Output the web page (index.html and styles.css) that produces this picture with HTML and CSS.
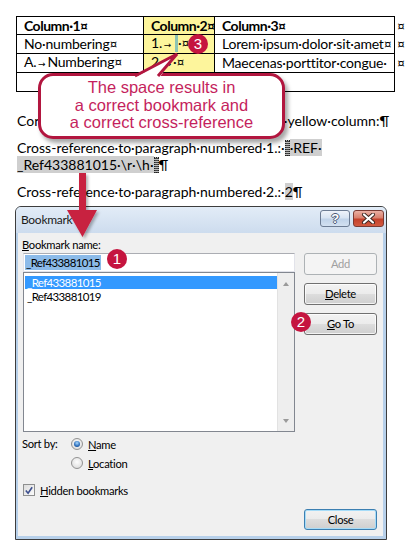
FILE: index.html
```html
<!DOCTYPE html>
<html lang="en">
<head>
<meta charset="utf-8">
<title>Bookmark</title>
<link rel="stylesheet" href="styles.css">
</head>
<body>
<main class="doc">
  <table class="tbl">
    <colgroup><col class="w1"><col class="w2"><col class="w3"><col class="w4"></colgroup>
    <tr>
      <td class="cell hd">Column·1¤</td>
      <td class="cell hd yel">Column·2¤</td>
      <td class="cell hd">Column·3¤</td>
      <td class="rowend">¤</td>
    </tr>
    <tr>
      <td class="cell">No·numbering¤</td>
      <td class="cell yel">1.<span class="tab">→</span><span class="caret"></span>·¤</td>
      <td class="cell">Lorem·ipsum·dolor·sit·amet¤</td>
      <td class="rowend">¤</td>
    </tr>
    <tr>
      <td class="cell">A.<span class="tab">→</span>Numbering¤</td>
      <td class="cell yel">2.<span class="tab">→</span>·¤</td>
      <td class="cell">Maecenas·porttitor·congue·</td>
      <td class="rowend">¤</td>
    </tr>
    <tr class="tall">
      <td class="cell" colspan="3"></td>
      <td class="rowend"></td>
    </tr>
  </table>
  <p class="para first">Correct·cross-references·to·the·items·in·the·yellow·column:¶</p>
  <p class="para">Cross-reference·to·paragraph·numbered·1.:·<span class="fmark"></span><span class="fld">·REF·</span><br><span class="fld">_Ref433881015·\r·\h·</span><span class="fmark"></span>¶</p>
  <p class="para last">Cross-reference·to·paragraph·numbered·2.:·<span class="fld">2</span>¶</p>

  <section class="dlg">
    <header class="titlebar">
      <span class="title">Bookmark</span>
      <span class="tbtns">
        <span class="tb help">?</span>
        <span class="tb close"><svg width="15" height="11" viewBox="0 0 15 11"><path d="M3 1.5 L12 9.5 M12 1.5 L3 9.5" stroke="#3a2520" stroke-width="4" stroke-linecap="round"/><path d="M3 1.5 L12 9.5 M12 1.5 L3 9.5" stroke="#fff" stroke-width="2.2" stroke-linecap="round"/></svg></span>
      </span>
    </header>
    <div class="dbody">
      <div class="lbl"><u>B</u>ookmark name:</div>
      <div class="main">
        <div class="left">
          <div class="input"><span class="sel">_Ref433881015</span></div>
          <div class="list">
            <div class="items">
              <div class="item on">_Ref433881015</div>
              <div class="item">_Ref433881019</div>
            </div>
            <div class="sbar"><span class="up"></span><span class="dn"></span></div>
          </div>
        </div>
        <div class="btns">
          <div class="btn dis">Add</div>
          <div class="btn"><u>D</u>elete</div>
          <div class="btn"><u>G</u>o To</div>
        </div>
      </div>
      <div class="sort">
        <span class="sortlbl">Sort by:</span>
        <div class="radios">
          <div class="ropt"><span class="radio on"></span><span><u>N</u>ame</span></div>
          <div class="ropt"><span class="radio"></span><span><u>L</u>ocation</span></div>
        </div>
      </div>
      <div class="chk"><span class="box"><svg width="11" height="11" viewBox="0 0 11 11"><path d="M2 5.5 L4.5 8.5 L9 2" fill="none" stroke="#3d4f8e" stroke-width="1.8"/></svg></span><span><u>H</u>idden bookmarks</span></div>
      <div class="foot"><div class="btn def">Close</div></div>
    </div>
  </section>
</main>

<div class="callout">The space results in<br>a correct bookmark and<br>a correct cross-reference</div>
<svg class="ovl" width="411" height="551" viewBox="0 0 411 551">
  <defs>
    <filter id="sh" x="-30%" y="-30%" width="160%" height="160%"><feDropShadow dx="2" dy="2" stdDeviation="1.5" flood-color="#000" flood-opacity="0.3"/></filter>
  </defs>
  <polygon points="134,78 177,54 159,78" fill="#fff"/>
  <polyline points="135,76 177,54 158,76" fill="none" stroke="#b2163f" stroke-width="3" stroke-linejoin="miter"/>
  <path d="M79 173 H86 V210 H97 L82.5 237 L67 210 H79 Z" fill="#c8203f" filter="url(#sh)"/>
</svg>
<span class="badge b3">3</span>
<span class="badge b1">1</span>
<span class="badge b2">2</span>
</body>
</html>
```
FILE: styles.css
```css
* { box-sizing: border-box; }
html, body { margin: 0; padding: 0; }
body { width: 411px; height: 551px; position: relative; overflow: hidden; background: #fff; }

.doc { padding-top: 16px; font-family: Lato, "Liberation Sans", sans-serif; font-size: 14px; color: #000; }

.tbl { margin-left: 16px; border-collapse: collapse; table-layout: fixed; width: 392px; }
.w1 { width: 127px; }
.w2 { width: 71px; }
.w3 { width: 180px; }
.w4 { width: 14px; }
.cell { border: 1px solid #000; height: 18px; padding: 0 0 0 7px; line-height: 16px; white-space: nowrap; overflow: hidden; letter-spacing: -0.2px; }
.tall .cell { height: 19px; }
.hd { font-weight: bold; letter-spacing: -0.5px; }
.yel { background: #fdf59c; }
.rowend { border: none; padding: 0 0 0 2px; line-height: 16px; white-space: nowrap; }
.tab { display: inline-block; width: 11px; text-align: center; font-family: "DejaVu Sans", sans-serif; font-size: 9px; letter-spacing: 0; }
.caret { display: inline-block; width: 3px; height: 17px; background: #8cc4b4; vertical-align: -4px; margin: 0 0 0 2px; }

.para { margin: 0 0 10px 17px; line-height: 17px; white-space: nowrap; }
.para.first { margin-top: 20px; }
.para.last { margin-bottom: 6px; }
.fld { background: #cfcfcf; }
.fmark { display: inline-block; width: 5px; height: 16px; vertical-align: -3px; border: 1px dotted #222; background: repeating-linear-gradient(#444 0 1px, #bbb 1px 2px); }

/* dialog */
.dlg { width: 372px; height: 334px; margin-left: 15px; border: 1px solid #3d3d3d; border-radius: 6px 6px 0 0; background: #b7d0ea; display: flex; flex-direction: column; font-family: Lato, "Open Sans", sans-serif; font-size: 11.2px; letter-spacing: -0.3px; color: #000; }
.titlebar { height: 26px; flex: none; display: flex; justify-content: space-between; padding: 0 2px 0 5px; background: linear-gradient(#e2ecf7, #cddcee); border-radius: 5px 5px 0 0; }
.title { line-height: 26px; font-size: 12px; color: #1b1b1b; }
.tbtns { display: flex; gap: 3px; padding-top: 3px; }
.tb { height: 17px; border: 1px solid #6c7c93; border-radius: 3px; display: flex; align-items: center; justify-content: center; }
.help { width: 30px; background: linear-gradient(#eef3fa, #d8e4f2 45%, #c0d3e9 55%, #d3e1f1); color: #fff; font-family: "Liberation Sans", sans-serif; font-weight: bold; font-size: 13px; text-shadow: 1px 0 #4a5a76, -1px 0 #4a5a76, 0 1px #4a5a76, 0 -1px #4a5a76; }
.close { width: 31px; border-color: #7a3a33; background: linear-gradient(#eab0a4, #d9806e 45%, #c4412b 55%, #d25a40); }

.dbody { flex: 1; margin: 0 3px 3px 2px; background: #f0f0f0; padding: 4px 6px 0 4px; display: flex; flex-direction: column; }
.lbl { height: 16px; line-height: 16px; }
.main { display: flex; }
.left { width: 272px; margin-left: 1px; }
.input { height: 19px; background: #fff; border: 1px solid #e2e3ea; border-top-color: #abadb3; padding: 1px 0 0 1px; }
.sel { display: inline-block; background: #8cbbe9; line-height: 15px; padding: 0 1px; font-size: 11.5px; letter-spacing: -0.65px; }
.list { height: 160px; border: 1px solid #828790; background: #fff; display: flex; }
.items { flex: 1; padding: 3px 0 0 1px; font-size: 11.5px; letter-spacing: -0.65px; }
.item { height: 13px; line-height: 13px; padding-left: 2px; margin-bottom: 1px; }
.item.on { background: #3399ff; color: #fff; }
.sbar { width: 17px; background: #eeeeee; border-left: 1px solid #e2e2e2; display: flex; flex-direction: column; justify-content: space-between; align-items: center; padding: 9px 0 8px; }
.up { width: 0; height: 0; border-left: 3.5px solid transparent; border-right: 3.5px solid transparent; border-bottom: 4px solid #9a9a9a; }
.dn { width: 0; height: 0; border-left: 3.5px solid transparent; border-right: 3.5px solid transparent; border-top: 4px solid #9a9a9a; }
.btns { margin-left: auto; width: 73px; display: flex; flex-direction: column; gap: 8px; }
.btn { height: 22px; border: 1px solid #707070; border-radius: 3px; background: linear-gradient(#f2f2f2, #ebebeb 50%, #dddddd 50%, #cfcfcf); box-shadow: inset 0 0 0 1px rgba(255,255,255,0.75); text-align: center; line-height: 20px; }
.btn.dis { border-color: #adb2b5; background: #f4f4f4; color: #a0a0a0; box-shadow: none; }
.btn.def { width: 73px; height: 21px; line-height: 19px; border-color: #3c7fb1; box-shadow: inset 0 0 0 1px #a6dcf8; }

.sort { display: flex; margin-top: 3px; }
.sortlbl { width: 49px; line-height: 18px; }
.radios { display: flex; flex-direction: column; gap: 1px; }
.ropt { height: 18px; display: flex; align-items: center; gap: 5px; }
.radio { width: 12px; height: 12px; border-radius: 50%; border: 1px solid #929292; background: radial-gradient(circle at 50% 40%, #fdfdfd, #d6d6d6); position: relative; }
.radio.on::after { content: ""; position: absolute; left: 2px; top: 2px; width: 6px; height: 6px; border-radius: 50%; background: radial-gradient(circle at 50% 35%, #a7d8ff, #2163b3 65%, #0e3a72); }
.chk { height: 18px; margin-top: 9px; margin-left: 1px; display: flex; align-items: center; gap: 5px; }
.box { width: 12px; height: 12px; border: 1px solid #8e8f8f; background: linear-gradient(135deg, #dcdcdc, #fbfbfb); display: flex; align-items: center; justify-content: center; }
.foot { display: flex; justify-content: flex-end; margin-top: 10px; }

/* annotations */
.callout { position: absolute; left: 38px; top: 73px; width: 247px; height: 66px; border: 3px solid #b2163f; border-radius: 15px; background: #fff; box-shadow: 3px 4px 4px rgba(0,0,0,0.35); color: #c51f5d; font-family: "Liberation Sans", Arial, sans-serif; font-size: 16.5px; line-height: 17.5px; text-align: center; padding-top: 3px; }
.ovl { position: absolute; left: 0; top: 0; }
.badge { position: absolute; width: 20px; height: 20px; border-radius: 50%; background: #c5143f; color: #fff; font-family: "Liberation Sans", Arial, sans-serif; font-size: 15px; line-height: 20px; text-align: center; }
.b3 { left: 188px; top: 34px; }
.b1 { left: 107px; top: 249px; }
.b2 { left: 291px; top: 312px; }
```
